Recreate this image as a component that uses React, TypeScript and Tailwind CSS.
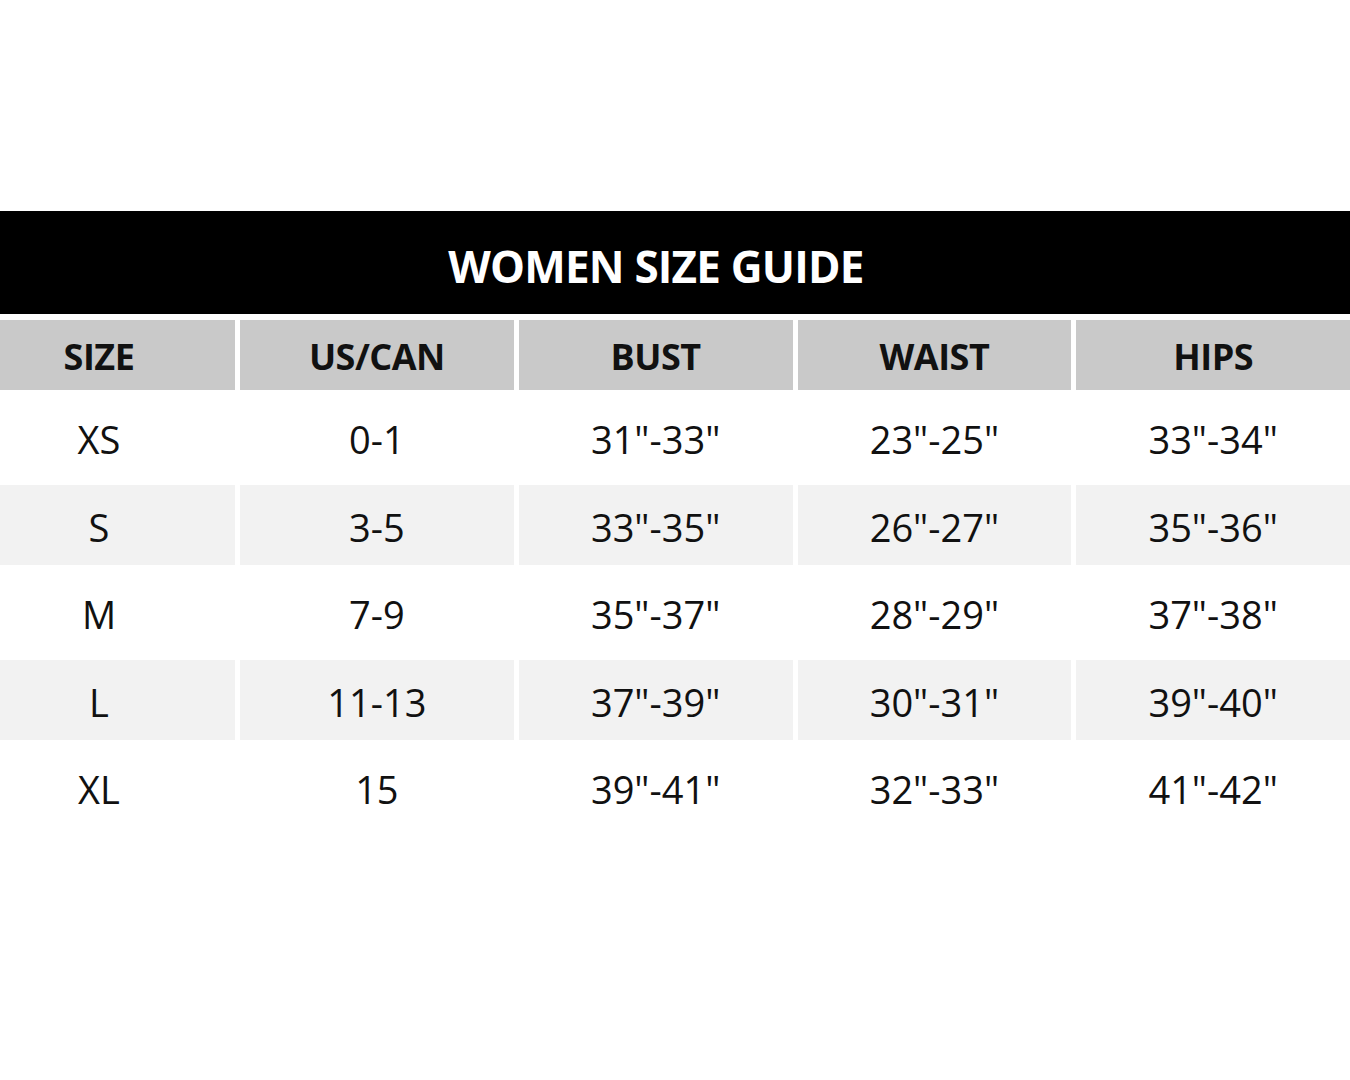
import React from 'react';

const COLUMNS = ['SIZE', 'US/CAN', 'BUST', 'WAIST', 'HIPS'];

const ROWS = [
  ['XS', '0-1', '31"-33"', '23"-25"', '33"-34"'],
  ['S', '3-5', '33"-35"', '26"-27"', '35"-36"'],
  ['M', '7-9', '35"-37"', '28"-29"', '37"-38"'],
  ['L', '11-13', '37"-39"', '30"-31"', '39"-40"'],
  ['XL', '15', '39"-41"', '32"-33"', '41"-42"'],
];

const App: React.FC = () => {
  return (
    <div
      className="min-h-screen w-[1350px] bg-white text-[#111111]"
      style={{ fontFamily: '"Open Sans", "Noto Sans", sans-serif' }}
    >
      <div className="h-[211px]" />

      <div className="flex h-[103px] items-center justify-center bg-black pr-[38px] pt-[6px]">
        <h1 className="text-[44px] font-bold leading-none tracking-[-0.8px] text-white">
          WOMEN SIZE GUIDE
        </h1>
      </div>

      {/* Table */}
      <div className="mt-[6px] grid grid-cols-[235px_1fr_1fr_1fr_1fr] gap-x-[5px] gap-y-[7.5px]">
        {COLUMNS.map((col, i) => (
          <div
            key={col}
            className={`flex h-[70px] items-center justify-center bg-[#c9c9c9] pt-[4px] text-[36px] font-bold leading-none tracking-[-0.5px] ${
              i === 0 ? 'pr-[37px]' : ''
            }`}
          >
            {col}
          </div>
        ))}

        {ROWS.map((row, r) =>
          row.map((cell, i) => (
            <div
              key={`${r}-${i}`}
              className={`flex h-[80px] items-center justify-center pt-[3px] text-[38px] font-medium leading-none ${
                r % 2 === 1 ? 'bg-[#f2f2f2]' : 'bg-white'
              } ${i === 0 ? 'pr-[37px]' : ''}`}
            >
              {cell}
            </div>
          ))
        )}
      </div>
    </div>
  );
};

export default App;
